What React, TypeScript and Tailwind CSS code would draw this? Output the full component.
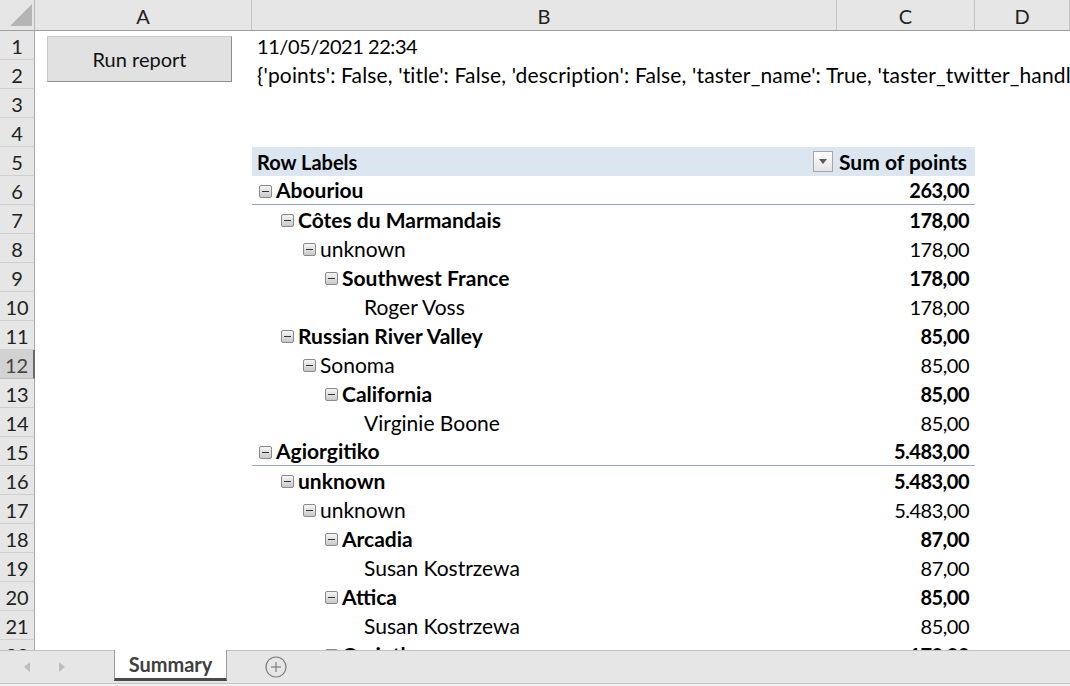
import React from 'react';

type PRow = { level: number; label: string; value: string; bold: boolean; line?: boolean };

const pivot: PRow[] = [
  { level: 0, label: 'Abouriou', value: '263,00', bold: true, line: true },
  { level: 1, label: 'Côtes du Marmandais', value: '178,00', bold: true },
  { level: 2, label: 'unknown', value: '178,00', bold: false },
  { level: 3, label: 'Southwest France', value: '178,00', bold: true },
  { level: 4, label: 'Roger Voss', value: '178,00', bold: false },
  { level: 1, label: 'Russian River Valley', value: '85,00', bold: true },
  { level: 2, label: 'Sonoma', value: '85,00', bold: false },
  { level: 3, label: 'California', value: '85,00', bold: true },
  { level: 4, label: 'Virginie Boone', value: '85,00', bold: false },
  { level: 0, label: 'Agiorgitiko', value: '5.483,00', bold: true, line: true },
  { level: 1, label: 'unknown', value: '5.483,00', bold: true },
  { level: 2, label: 'unknown', value: '5.483,00', bold: false },
  { level: 3, label: 'Arcadia', value: '87,00', bold: true },
  { level: 4, label: 'Susan Kostrzewa', value: '87,00', bold: false },
  { level: 3, label: 'Attica', value: '85,00', bold: true },
  { level: 4, label: 'Susan Kostrzewa', value: '85,00', bold: false },
  { level: 3, label: 'Corinth', value: '170,00', bold: true },
];

const pads = ['pl-[7px]', 'pl-[29px]', 'pl-[51px]', 'pl-[73px]', 'pl-[112px]'];

function Minus() {
  return (
    <span className="inline-flex w-[13px] h-[13px] shrink-0 items-center justify-center border border-[#8a8a8a] rounded-[2px] bg-linear-to-b from-[#f6f6f6] to-[#c9c9c9] mr-[4px] mt-[2px]">
      <span className="block w-[7px] h-[1px] bg-[#333]" />
    </span>
  );
}

function RowHead({ n, selected }: { n: number; selected?: boolean }) {
  return (
    <div
      className={
        selected
          ? 'flex items-center justify-center bg-[#d2d2d2] text-[#444] border-b border-[#bdbdbd] border-r-2 border-r-[#6a6a6a] text-[20px] leading-none'
          : 'flex items-center justify-center bg-[#e6e6e6] text-[#222] border-b border-[#cfcfcf] border-r border-r-[#a8a8a8] text-[20px] leading-none'
      }
    >
      <span className="pt-[1px]">{n}</span>
    </div>
  );
}

export default function App() {
  return (
    <div className="w-[1070px] h-[686px] overflow-hidden bg-white flex flex-col font-[Lato,'Noto_Sans',sans-serif] text-black">
      <div className="h-[650px] overflow-hidden shrink-0">
        <div className="grid grid-cols-[35px_217px_585px_138px_1fr] grid-rows-[31px_repeat(22,29px)]">
          {/* column headers */}
          <div className="bg-[#e6e6e6] border-b border-[#9e9e9e] border-r border-r-[#b8b8b8] relative">
            <svg className="absolute left-[10px] top-[4px]" width="22" height="22" viewBox="0 0 22 22">
              <polygon points="22,0 22,22 0,22" fill="#b5b5b5" />
            </svg>
          </div>
          {['A', 'B', 'C', 'D'].map((c) => (
            <div
              key={c}
              className="bg-[#e6e6e6] border-b border-[#9e9e9e] border-r border-r-[#c4c4c4] flex items-center justify-center text-[20px] text-[#222] leading-none"
            >
              <span className="pt-[2px]">{c}</span>
            </div>
          ))}

          {/* row 1 */}
          <RowHead n={1} />
          <div className="row-span-2 pl-[12px] pt-[5px]">
            <div className="w-[185px] h-[46px] bg-[#e1e1e1] border border-[#cacaca] border-b-[#8c8c8c] border-r-[#8c8c8c] flex items-center justify-center text-[20px] text-[#111]">
              Run report
            </div>
          </div>
          <div className="col-span-3 flex items-center pl-[5px] text-[20px] tracking-[-0.45px] whitespace-nowrap overflow-hidden">
            <span>11/05/2021 22:34</span>
          </div>

          {/* row 2 */}
          <RowHead n={2} />
          <div className="col-span-3 flex items-center pl-[5px] text-[21px] tracking-[0.15px] whitespace-nowrap overflow-hidden">
            <span>
              {"{'points': False, 'title': False, 'description': False, 'taster_name': True, 'taster_twitter_handle': False, 'price': False}"}
            </span>
          </div>

          {/* rows 3, 4 */}
          <RowHead n={3} />
          <div className="col-span-4" />
          <RowHead n={4} />
          <div className="col-span-4" />

          {/* row 5 pivot header */}
          <RowHead n={5} />
          <div />
          <div className="bg-[#dce6f1] flex items-center justify-between pl-[5px] pr-[4px] text-[20px] font-bold">
            <span>Row Labels</span>
            <span className="w-[20px] h-[21px] border border-[#a6a6a6] bg-linear-to-b from-white to-[#e4e4e4] flex items-center justify-center">
              <svg width="8" height="5" viewBox="0 0 8 5">
                <polygon points="0,0 8,0 4,5" fill="#5a5a5a" />
              </svg>
            </span>
          </div>
          <div className="bg-[#dce6f1] flex items-center justify-end pr-[8px] text-[21px] font-bold whitespace-nowrap">
            <span>Sum of points</span>
          </div>
          <div />

          {/* pivot rows */}
          {pivot.map((r, i) => {
            const n = i + 6;
            return (
              <React.Fragment key={n}>
                <RowHead n={n} selected={n === 12} />
                <div />
                <div
                  className={
                    'flex items-center text-[21px] whitespace-nowrap ' +
                    pads[r.level] +
                    (r.bold ? ' font-bold' : '') +
                    (r.line ? ' border-b border-[#95a9c6]' : '')
                  }
                >
                  {r.level < 4 && <Minus />}
                  <span>{r.label}</span>
                </div>
                <div
                  className={
                    'flex items-center justify-end pr-[6px] text-[20px] tracking-[-0.5px]' +
                    (r.bold ? ' font-bold' : '') +
                    (r.line ? ' border-b border-[#95a9c6]' : '')
                  }
                >
                  <span>{r.value}</span>
                </div>
                <div />
              </React.Fragment>
            );
          })}
        </div>
      </div>

      {/* sheet tab bar */}
      <div className="h-[33px] shrink-0 bg-[#e6e6e6] border-t border-[#c2c2c2] flex items-stretch">
        <div className="w-[114px] flex items-center">
          <svg className="ml-[24px]" width="6" height="10" viewBox="0 0 6 10">
            <polygon points="6,0 6,10 0,5" fill="#bdbdbd" />
          </svg>
          <svg className="ml-[29px]" width="6" height="10" viewBox="0 0 6 10">
            <polygon points="0,0 0,10 6,5" fill="#bdbdbd" />
          </svg>
        </div>
        <div className="w-[113px] -mt-[1px] mb-[2px] bg-white border-l border-r border-[#9a9a9a] border-b-[3px] border-b-[#4a4a4a] flex items-center justify-center text-[20px] font-bold text-[#404040]">
          <span>Summary</span>
        </div>
        <div className="flex items-center pl-[38px]">
          <svg width="22" height="22" viewBox="0 0 22 22">
            <circle cx="11" cy="11" r="10" fill="none" stroke="#7c7c7c" strokeWidth="1.2" />
            <line x1="11" y1="6" x2="11" y2="16" stroke="#7c7c7c" strokeWidth="1.2" />
            <line x1="6" y1="11" x2="16" y2="11" stroke="#7c7c7c" strokeWidth="1.2" />
          </svg>
        </div>
      </div>
      <div className="flex-1 bg-[#f0f0f0] border-t border-[#c6c6c6]" />
    </div>
  );
}
